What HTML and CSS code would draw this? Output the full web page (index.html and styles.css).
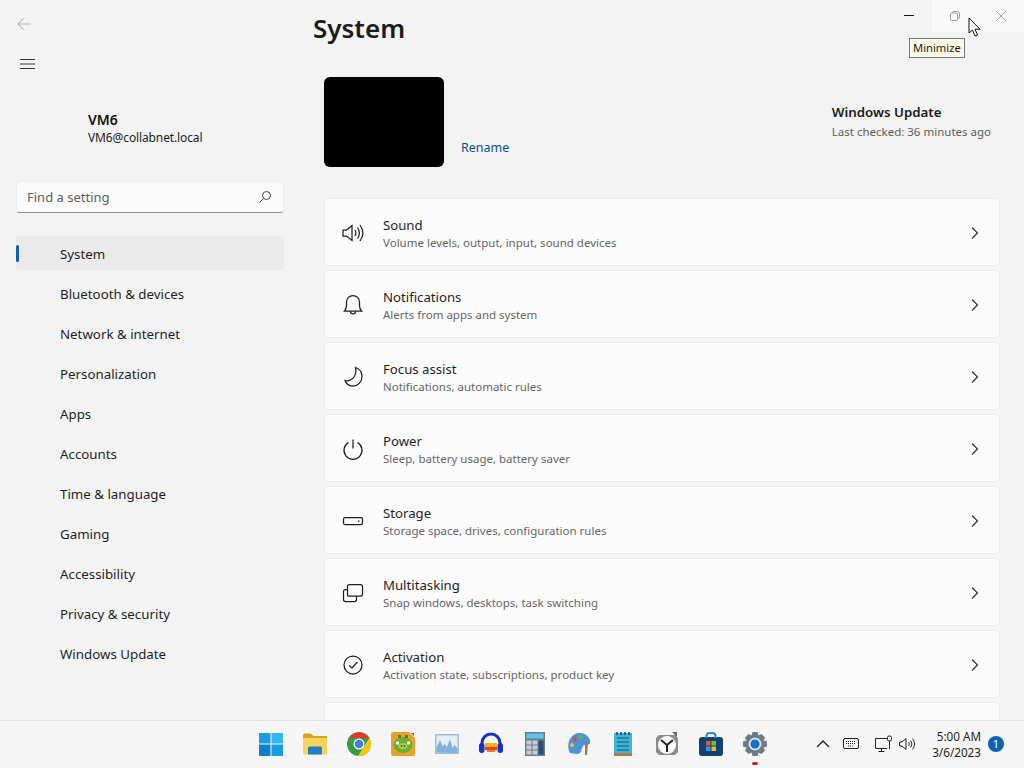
FILE: index.html
```html
<!DOCTYPE html>
<html lang="en">
<head>
<meta charset="utf-8">
<title>Settings</title>
<link rel="stylesheet" href="styles.css">
</head>
<body>
<div class="window">
  <aside class="sidebar">
    <svg class="back" width="16" height="16" viewBox="0 0 16 16"><path d="M14.500 8H2M7.500 2.500 2 8l5.500 5.500"/></svg>
    <svg class="burger" width="16" height="12" viewBox="0 0 16 12"><path d="M0 1.500h15M0 6h15M0 10.500h15"/></svg>
    <div class="user">
      <div class="user-name">VM6</div>
      <div class="user-mail">VM6@collabnet.local</div>
    </div>
    <div class="search">
      <span>Find a setting</span>
      <svg width="14" height="14" viewBox="0 0 14 14"><circle cx="8.500" cy="5.500" r="4"/><path d="M5.500 8.500 1.500 12.500"/></svg>
    </div>
    <nav class="nav">
      <div class="nav-item active">System</div>
      <div class="nav-item">Bluetooth &amp; devices</div>
      <div class="nav-item">Network &amp; internet</div>
      <div class="nav-item">Personalization</div>
      <div class="nav-item">Apps</div>
      <div class="nav-item">Accounts</div>
      <div class="nav-item">Time &amp; language</div>
      <div class="nav-item">Gaming</div>
      <div class="nav-item">Accessibility</div>
      <div class="nav-item">Privacy &amp; security</div>
      <div class="nav-item">Windows Update</div>
    </nav>
  </aside>
  <main class="main">
    <h1 class="title">System</h1>
    <section class="summary">
      <div class="device"></div>
      <a class="rename">Rename</a>
      <div class="update">
        <div class="update-title">Windows Update</div>
        <div class="update-sub">Last checked: 36 minutes ago</div>
      </div>
    </section>
    <section class="cards">
      <div class="card">
        <svg class="card-icon" viewBox="0 0 22 22"><path d="M1 8h3.500L10 3.500v15L4.500 14H1z"/><path d="M13 8c1.200 2 1.200 4 0 6M15.500 5.500c2.400 3.500 2.400 7.500 0 11M18 3c3.600 5 3.600 11 0 16"/></svg>
        <div class="card-text"><div class="card-title">Sound</div><div class="card-sub">Volume levels, output, input, sound devices</div></div>
        <svg class="chev" viewBox="0 0 10 14"><path d="M2 1.500 7.500 7 2 12.500"/></svg>
      </div>
      <div class="card">
        <svg class="card-icon" viewBox="0 0 22 22"><path d="M2.500 17c1.500-1.500 2-3 2-5.500V8a6.500 6.500 0 0 1 13 0v3.500c0 2.500.5 4 2 5.500z"/><path d="M8.500 17.500c0 3 5 3 5 0"/></svg>
        <div class="card-text"><div class="card-title">Notifications</div><div class="card-sub">Alerts from apps and system</div></div>
        <svg class="chev" viewBox="0 0 10 14"><path d="M2 1.500 7.500 7 2 12.500"/></svg>
      </div>
      <div class="card">
        <svg class="card-icon" viewBox="0 0 22 22"><path d="M13.500 1.500c3 1 6.500 4 6.500 9 0 5.500-4 9.500-9 9.500-4 0-7-2.500-8-5.500 6 1.500 12.500-4 10.500-13z"/></svg>
        <div class="card-text"><div class="card-title">Focus assist</div><div class="card-sub">Notifications, automatic rules</div></div>
        <svg class="chev" viewBox="0 0 10 14"><path d="M2 1.500 7.500 7 2 12.500"/></svg>
      </div>
      <div class="card">
        <svg class="card-icon" viewBox="0 0 22 22"><path d="M11 1.500v9M6.500 4.500a9 9 0 1 0 9 0"/></svg>
        <div class="card-text"><div class="card-title">Power</div><div class="card-sub">Sleep, battery usage, battery saver</div></div>
        <svg class="chev" viewBox="0 0 10 14"><path d="M2 1.500 7.500 7 2 12.500"/></svg>
      </div>
      <div class="card">
        <svg class="card-icon" viewBox="0 0 22 22"><rect x="1.500" y="7.500" width="19" height="7" rx="1.500"/><path d="M16 11h1.500"/></svg>
        <div class="card-text"><div class="card-title">Storage</div><div class="card-sub">Storage space, drives, configuration rules</div></div>
        <svg class="chev" viewBox="0 0 10 14"><path d="M2 1.500 7.500 7 2 12.500"/></svg>
      </div>
      <div class="card">
        <svg class="card-icon" viewBox="0 0 22 22"><path d="M5.500 14V4.500a2 2 0 0 1 2-2h11a2 2 0 0 1 2 2V12a2 2 0 0 1-2 2h-13M5.500 7.500h-2a2 2 0 0 0-2 2v8a2 2 0 0 0 2 2h9a2 2 0 0 0 2-2V14"/></svg>
        <div class="card-text"><div class="card-title">Multitasking</div><div class="card-sub">Snap windows, desktops, task switching</div></div>
        <svg class="chev" viewBox="0 0 10 14"><path d="M2 1.500 7.500 7 2 12.500"/></svg>
      </div>
      <div class="card">
        <svg class="card-icon" viewBox="0 0 22 22"><circle cx="11" cy="11" r="9"/><path d="M7 11.500l3 2.500 5.500-6"/></svg>
        <div class="card-text"><div class="card-title">Activation</div><div class="card-sub">Activation state, subscriptions, product key</div></div>
        <svg class="chev" viewBox="0 0 10 14"><path d="M2 1.500 7.500 7 2 12.500"/></svg>
      </div>
      <div class="card"></div>
    </section>
  </main>
</div>

<div class="caption">
  <div class="cap-btn"><svg width="12" height="12" viewBox="0 0 12 12"><path d="M1 5.500h10" stroke="#111"/></svg></div>
  <div class="cap-btn dim"><svg width="12" height="12" viewBox="0 0 12 12"><rect x="1.500" y="3" width="7" height="7.500" rx="1.200"/><path d="M3.500 3V2.500q0-1 1-1h4q2 0 2 2v4q0 1-2 1"/></svg></div>
  <div class="cap-btn dim"><svg width="12" height="12" viewBox="0 0 12 12"><path d="M1 1l10 10M11 1 1 11"/></svg></div>
</div>
<div class="tooltip">Minimize</div>
<svg class="cursor" width="14" height="20" viewBox="0 0 14 20"><path d="M1 1v15l3.500-3 2.500 6 2.500-1-2.500-5.800H12z"/></svg>

<footer class="taskbar">
  <div class="apps">
    <svg class="app" viewBox="0 0 24 24"><path fill="#1a9ce0" d="M0 1h11.500v10.500H0z"/><path fill="#34b6ee" d="M12.500 1H24v10.500H12.500z"/><path fill="#0f7fcb" d="M0 12.500h11.500V24H0z"/><path fill="#1a9ce0" d="M12.500 12.500H24V24H12.500z"/></svg>
    <svg class="app" viewBox="0 0 24 24"><path fill="#d9a520" d="M0 3q0-1.500 1.500-1.500h6L10.500 4H24v2H0z"/><path fill="#f7d45c" d="M0 6h24v15q0 1.500-1.500 1.500h-21Q0 22.500 0 21z"/><path fill="#1f7fc4" d="M5 22.500V16q0-1.500 1.500-1.500h11Q19 14.500 19 16v6.500z"/></svg>
    <svg class="app" viewBox="0 0 24 24"><circle cx="12" cy="12" r="12" fill="#3a9a46"/><path fill="#e0392e" d="M2 6a12 12 0 0 1 20.400 0H12z"/><path fill="#f5c518" d="M22.400 6A12 12 0 0 1 11 24l5-8z"/><circle cx="12" cy="12" r="5.500" fill="#fff"/><circle cx="12" cy="12" r="4.300" fill="#3f7fe0"/></svg>
    <svg class="app" viewBox="0 0 24 24"><rect width="24" height="24" rx="2" fill="#eca12e"/><ellipse cx="12" cy="13" rx="9.500" ry="8" fill="#6fae2e"/><path fill="#4f8a1e" d="M7 3h3v3H7zM14 3h3v3h-3z"/><ellipse cx="12" cy="14" rx="4.500" ry="3" fill="#a4d44e"/><circle cx="10.500" cy="14" r=".9" fill="#3f6a14"/><circle cx="13.500" cy="14" r=".9" fill="#3f6a14"/><circle cx="6.500" cy="11" r="1.700" fill="#fff"/><circle cx="17.500" cy="11" r="1.700" fill="#fff"/><path fill="#fff" d="M18 0h6v6z"/><path fill="#d33" d="M20 1h3v3z"/></svg>
    <svg class="app" viewBox="0 0 24 24"><rect y="2" width="24" height="20" fill="#a9bccb"/><rect x="1.500" y="3.500" width="21" height="17" fill="#e3eef6"/><path fill="#7fb2dc" d="M1.500 20.500v-5L5 8l2.500 6 2-2 2.500 3 3-8 2.500 9 2-3 3 3v5z"/></svg>
    <svg class="app" viewBox="0 0 24 24"><path fill="none" stroke="#1c2fbe" stroke-width="3" d="M3 15v-4a9 9 0 0 1 18 0v4"/><rect x="0" y="11" width="5.500" height="10" rx="2.700" fill="#1c2fbe"/><rect x="18.500" y="11" width="5.500" height="10" rx="2.700" fill="#1c2fbe"/><path fill="#f2b21c" d="M6 11h12v4H6z"/><path fill="#e4402a" d="M6 15h12v3H6z"/><path fill="#f07a1e" d="M8 18h8v2H8z"/></svg>
    <svg class="app" viewBox="0 0 24 24"><rect x="2" width="20" height="24" fill="#6e7d88"/><rect x="3.500" y="1.500" width="17" height="5" fill="#5cc6e8"/><g fill="#c4ced6"><rect x="3.500" y="8.500" width="5" height="4"/><rect x="9.500" y="8.500" width="5" height="4"/><rect x="3.500" y="13.500" width="5" height="4"/><rect x="9.500" y="13.500" width="5" height="4"/><rect x="3.500" y="18.500" width="5" height="4"/><rect x="9.500" y="18.500" width="5" height="4"/></g><rect x="15.500" y="8.500" width="5" height="14" fill="#28506f"/></svg>
    <svg class="app" viewBox="0 0 24 24"><path fill="#4d93d6" d="M3 21C-1 14 2 3 11 1c8-1 13 5 12 10-1 3-5 1-7 3-2 3-1 8-6 8-3 0-5-1-7-1z"/><circle cx="8" cy="7" r="2" fill="#e0483a"/><circle cx="14" cy="5" r="2" fill="#5fb548"/><circle cx="5" cy="13" r="2" fill="#f2c12e"/><path fill="#a9793f" d="M18 10h3l-1 13h-2z"/></svg>
    <svg class="app" viewBox="0 0 24 24"><path fill="#3fb4d8" d="M3 1h18v20H3z"/><path fill="#b47a4a" d="M3 21h18v3H3z"/><path stroke="#0e5a78" stroke-width="1.200" d="M6 6h12M6 10h12M6 14h12M6 18h12"/><path stroke="#14495f" stroke-width="1.500" d="M6 0v3M10 0v3M14 0v3M18 0v3"/></svg>
    <svg class="app" viewBox="0 0 24 24"><path fill="#8a8d90" d="M1 6 4 3h16l3 3v14l-3 3H4l-3-3z"/><circle cx="12" cy="13" r="9" fill="#fff"/><path fill="none" stroke="#222" stroke-width="2" d="M6 8l6 5 6-5M12 13v7"/><path fill="#666" d="M17 0h5v5z"/></svg>
    <svg class="app" viewBox="0 0 24 24"><rect y="5" width="24" height="19" rx="3" fill="#14426f"/><path fill="none" stroke="#2d8bc9" stroke-width="2" d="M7.500 6V4q0-3 3-3h3q3 0 3 3v2"/><rect x="7" y="9" width="4.500" height="4.500" fill="#e8542b"/><rect x="12.500" y="9" width="4.500" height="4.500" fill="#7fba2a"/><rect x="7" y="14.500" width="4.500" height="4.500" fill="#26a0e0"/><rect x="12.500" y="14.500" width="4.500" height="4.500" fill="#f6b71c"/></svg>
    <div class="app-wrap">
      <svg class="app" viewBox="0 0 24 24"><path fill="#6c7a86" d="M9.500 0h5l1 3.500 3-1.500 3.500 3.500-1.500 3L24 9.500v5l-3.500 1 1.500 3-3.500 3.500-3-1.500-1 3.500h-5l-1-3.500-3 1.500L2 18.500l1.500-3L0 14.500v-5l3.500-1-1.500-3L5.500 2l3 1.500z"/><circle cx="12" cy="12" r="6.500" fill="#d7e3ee"/><circle cx="12" cy="12" r="4.500" fill="#1673c6"/></svg>
      <span class="app-dot"></span>
    </div>
  </div>
  <div class="tray">
    <svg class="t-chev" width="14" height="10" viewBox="0 0 14 10"><path d="M1 8l6-6 6 6"/></svg>
    <svg class="t-kb" width="16" height="12" viewBox="0 0 16 12"><rect x=".5" y=".5" width="15" height="10" rx="1.500"/><path d="M3 3.500h10M3 5.500h10M5 8h6" stroke-dasharray="1 1"/></svg>
    <svg class="t-net" width="18" height="18" viewBox="0 0 18 18"><path d="M12 3.500H.5v10H12M6.500 13.500v3M3.500 16.500h6"/><rect x="12.500" y="1" width="4" height="5" rx="1.500"/><path d="M14.500 6v8"/></svg>
    <svg class="t-vol" width="17" height="14" viewBox="0 0 17 14"><path d="M.5 5h2.500L7 1.500v11L3 9H.5zM9.500 5c1 1.300 1 2.700 0 4M11.500 3.500c1.700 2.200 1.700 4.800 0 7M13.500 1.500c2.700 3.500 2.700 7.500 0 11"/></svg>
    <div class="clock"><div>5:00 AM</div><div>3/6/2023</div></div>
    <div class="badge">1</div>
  </div>
</footer>
</body>
</html>
```
FILE: styles.css
```css
* { box-sizing: border-box; }
html, body { margin: 0; height: 100%; }
body {
  width: 1024px;
  height: 768px;
  overflow: hidden;
  display: flex;
  flex-direction: column;
  position: relative;
  background: #f3f3f3;
  color: #1a1a1a;
  font-family: "Noto Sans", "Open Sans", sans-serif;
  font-size: 14px;
}
svg { fill: none; stroke: #222; stroke-width: 1; display: block; flex: none; }

.window { flex: none; height: 720px; display: flex; overflow: hidden; }

/* Sidebar */
.sidebar { width: 300px; flex: none; padding: 16px 16px 0; display: flex; flex-direction: column; }
.back { stroke: #bdbdbd; stroke-width: 1.200; }
.burger { margin: 26px 0 0 4px; stroke: #333; }
.user { margin: 40px 0 0 72px; height: 52px; }
.user-name { font-size: 14px; line-height: 20px; font-weight: 600; color: #111; }
.user-mail { font-size: 12px; line-height: 16px; color: #1c1c1c; letter-spacing: -.12px; }
.search {
  margin-top: 19px;
  height: 32px;
  width: 268px;
  padding: 0 11px 0 10px;
  display: flex;
  align-items: center;
  justify-content: space-between;
  background: #fbfbfb;
  border: 1px solid #ececec;
  border-bottom: 1px solid #8a8a8a;
  border-radius: 4px;
  color: #5f5f5f;
  font-size: 13px;
}
.search svg { stroke: #444; }
.nav { margin-top: 23px; display: flex; flex-direction: column; }
.nav-item {
  height: 34px;
  margin-bottom: 6px;
  width: 268px;
  padding: 1px 0 0 44px;
  display: flex;
  align-items: center;
  font-size: 13.300px;
  color: #1f1f1f;
  border-radius: 4px;
  position: relative;
}
.nav-item.active { background: #eaeaea; }
.nav-item.active::before {
  content: "";
  position: absolute;
  left: 0;
  top: 9px;
  width: 3px;
  height: 17px;
  border-radius: 2px;
  background: #0f62a8;
}

/* Main */
.main { flex: 1; min-width: 0; padding-right: 24px; padding-left: 24px; }
.title {
  margin: 10px 0 0 -11px;
  height: 37px;
  font-size: 26px;
  line-height: 37px;
  font-weight: 600;
  color: #1c1c1c;
}
.summary { margin-top: 30px; height: 90px; display: flex; align-items: flex-end; }
.device { width: 120px; height: 90px; background: #000; border-radius: 6px; }
.rename { margin: 0 0 9px 17px; font-size: 12.500px; line-height: 20px; color: #0a4f87; }
.update { margin: 0 9px 25px auto; }
.update-title { font-size: 13.300px; line-height: 20px; font-weight: 600; color: #1a1a1a; }
.update-sub { font-size: 11.500px; line-height: 20px; color: #5d5d5d; }

.cards { margin-top: 31px; display: flex; flex-direction: column; gap: 4px; }
.card {
  flex: none;
  height: 68px;
  padding: 2px 20px 0 17px;
  display: flex;
  align-items: center;
  background: #fbfbfb;
  border: 1px solid #ececec;
  border-radius: 4px;
}
.card-icon { width: 22px; height: 22px; stroke: #202020; stroke-width: 1.250; }
.card-text { margin-left: 19px; flex: 1; }
.card-title { font-size: 13.200px; line-height: 19px; color: #1f1f1f; }
.card-sub { font-size: 11.500px; line-height: 16px; color: #666; }
.chev { width: 10px; height: 14px; margin-right: -1px; stroke: #333; stroke-width: 1.200; }

/* Window caption and tooltip */
.caption { position: absolute; top: 0; right: 0; display: flex; height: 32px; }
.cap-btn { width: 46px; height: 32px; display: flex; align-items: center; justify-content: center; }
.cap-btn.dim { background: #f9f9f9; }
.cap-btn.dim svg { stroke: #9b9b9b; }
.tooltip {
  position: absolute;
  left: 909px;
  top: 38px;
  height: 20px;
  padding: 0 3px;
  background: #fbfbe4;
  border: 1px solid #777;
  font-size: 11.200px;
  line-height: 18px;
  color: #1a1a1a;
}
.cursor { position: absolute; left: 968px; top: 17px; fill: #fff; stroke: #111; }

/* Taskbar */
.taskbar {
  flex: none;
  height: 48px;
  padding-bottom: 1px;
  display: flex;
  align-items: center;
  background: #f5f5f5;
  border-top: 1px solid #e4e4e4;
}
.apps { margin-left: 259px; display: flex; gap: 20px; }
.app { width: 24px; height: 24px; stroke: none; }
.app-wrap { position: relative; }
.app-dot {
  position: absolute;
  left: 9px;
  top: 30px;
  width: 6px;
  height: 3px;
  border-radius: 2px;
  background: #c42b1c;
}
.tray { margin-left: auto; padding-right: 20px; display: flex; align-items: center; }
.tray svg { stroke: #222; }
.tray .t-chev { margin-right: 13px; stroke-width: 1.300; }
.t-kb { margin-right: 16px; }
.t-net { margin-right: 6px; }
.t-vol { margin-right: 16px; }
.clock { font-size: 11.700px; line-height: 16px; text-align: right; color: #1f1f1f; }
.badge {
  margin-left: 7px;
  width: 16px;
  height: 16px;
  border-radius: 50%;
  background: #0b63b6;
  color: #fff;
  font-size: 11px;
  line-height: 16px;
  text-align: center;
}
```
